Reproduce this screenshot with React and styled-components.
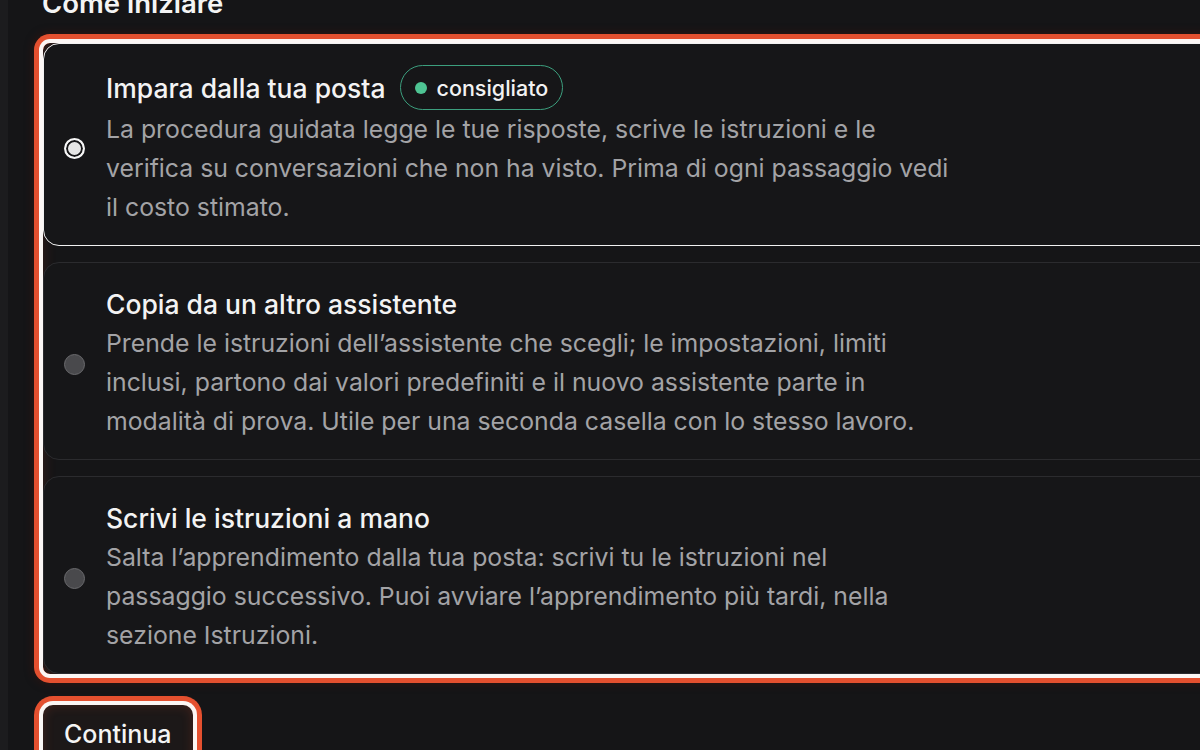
import React from "react";
import styled, { createGlobalStyle } from "styled-components";

const GlobalStyle = createGlobalStyle`
  html, body { margin: 0; padding: 0; background: #161618; overflow: hidden; }
  body { font-family: Inter, "Noto Sans", sans-serif; color: #f2f2f2; -webkit-font-smoothing: antialiased; }
  * { box-sizing: border-box; }
`;

const Page = styled.div`
  display: flex;
  min-height: 750px;
  width: 1400px;
`;

const Rail = styled.div`
  width: 8px;
  flex: none;
  background: #1c1c1e;
`;

const Main = styled.main`
  flex: 1;
  background: #151517;
  padding: 0 0 0 35px;
  display: flex;
  flex-direction: column;
`;

const Heading = styled.h2`
  margin: -14px 0 0 -1px;
  font-size: 27.5px;
  line-height: 34px;
  font-weight: 600;
  color: #f4f4f4;
`;

const Group = styled.div`
  margin-top: 23px;
  width: 1240px;
  display: flex;
  flex-direction: column;
  gap: 16px;
  border-radius: 7px;
  box-shadow: 0 0 0 4px #fbf6f4, 0 0 0 9px #e4502f, 0 0 10px 9px rgba(80, 20, 10, 0.5),
    inset 0 0 14px rgba(228, 80, 47, 0.18);
`;

const Card = styled.label`
  display: grid;
  grid-template-columns: 22px 1fr;
  column-gap: 20px;
  align-items: center;
  padding: 21px 24px 18px 20px;
  border-radius: 16px;
  background: #161618;
  border: ${(p) => (p.$selected ? "1.5px solid #f1f1f1" : "1px solid #2b2b2e")};
  cursor: pointer;
`;

const Radio = styled.span`
  width: 21px;
  height: 21px;
  border-radius: 50%;
  justify-self: center;
  margin-top: 4px;
  margin-left: -2px;
  ${(p) =>
    p.$checked
      ? `border: 2px solid #f7f7f7; background: #e6e6e6; box-shadow: inset 0 0 0 2px #161618;`
      : `border: 1.5px solid #6a6a6d; background: #49494c;`}
`;

const Body = styled.div`
  display: flex;
  flex-direction: column;
`;

const TitleRow = styled.div`
  display: flex;
  align-items: center;
  gap: 14px;
  min-height: 40px;
`;

const Title = styled.span`
  font-size: 26.5px;
  font-weight: 500;
  color: #f3f3f3;
`;

const Badge = styled.span`
  display: inline-flex;
  align-items: center;
  gap: 10px;
  height: 45px;
  padding: 0 14px 0 14px;
  border-radius: 999px;
  border: 1.5px solid #3c9f7e;
  font-size: 21.5px;
  font-weight: 500;
  color: #f2f2f2;
`;

const Dot = styled.span`
  width: 12px;
  height: 12px;
  border-radius: 50%;
  background: #4ec493;
`;

const Desc = styled.p`
  margin: 0;
  max-width: 845px;
  font-size: 24.8px;
  line-height: 39px;
  color: #a3a3a6;
`;

const Button = styled.button`
  margin-top: 31px;
  align-self: flex-start;
  height: 62px;
  padding: 0 21px 4px 21px;
  border: none;
  border-radius: 10px;
  background: #1c1818;
  color: #f4f4f4;
  font-family: inherit;
  font-size: 25px;
  font-weight: 500;
  box-shadow: 0 0 0 4px #fbf6f4, 0 0 0 9px #e4502f, inset 0 0 12px rgba(228, 80, 47, 0.2);
  cursor: pointer;
`;

const options = [
  {
    title: "Impara dalla tua posta",
    badge: "consigliato",
    desc: "La procedura guidata legge le tue risposte, scrive le istruzioni e le verifica su conversazioni che non ha visto. Prima di ogni passaggio vedi il costo stimato.",
  },
  {
    title: "Copia da un altro assistente",
    desc: "Prende le istruzioni dell\u2019assistente che scegli; le impostazioni, limiti inclusi, partono dai valori predefiniti e il nuovo assistente parte in modalità di prova. Utile per una seconda casella con lo stesso lavoro.",
  },
  {
    title: "Scrivi le istruzioni a mano",
    desc: "Salta l\u2019apprendimento dalla tua posta: scrivi tu le istruzioni nel passaggio successivo. Puoi avviare l\u2019apprendimento più tardi, nella sezione Istruzioni.",
  },
];

export default function App() {
  const [selected, setSelected] = React.useState(0);
  return (
    <>
      <GlobalStyle />
      <Page>
        <Rail />
        <Main>
          <Heading>Come iniziare</Heading>
          <Group role="radiogroup">
            {options.map((o, i) => (
              <Card key={o.title} $selected={selected === i} onClick={() => setSelected(i)}>
                <Radio $checked={selected === i} />
                <Body>
                  <TitleRow>
                    <Title>{o.title}</Title>
                    {o.badge && (
                      <Badge>
                        <Dot />
                        {o.badge}
                      </Badge>
                    )}
                  </TitleRow>
                  <Desc>{o.desc}</Desc>
                </Body>
              </Card>
            ))}
          </Group>
          <Button>Continua</Button>
        </Main>
      </Page>
    </>
  );
}
